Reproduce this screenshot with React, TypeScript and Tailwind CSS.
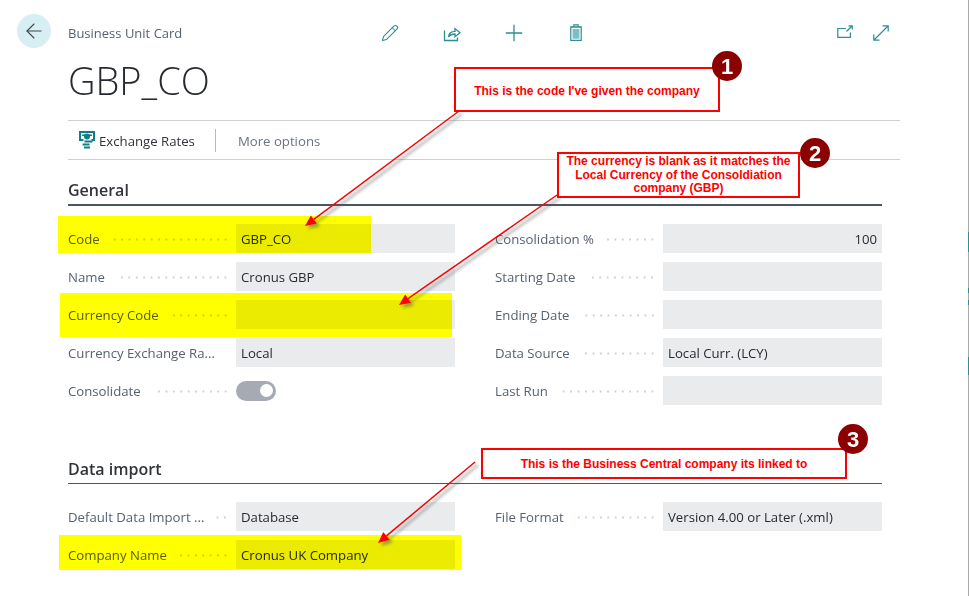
import { ArrowLeft, Pencil } from 'lucide-react';

const teal = '#2b8f94';

function Leader() {
  return (
    <span className="mt-[2px] mr-[7px] ml-3 h-[3px] flex-1 bg-[radial-gradient(circle,#ced1d5_1px,transparent_1.2px)] bg-[length:7.4px_3px] bg-right bg-repeat-x" />
  );
}

function Field({ label, value, right }: { label: string; value?: string; right?: boolean }) {
  return (
    <div className="flex h-[29px] items-center">
      <div className="flex w-[168px] items-center">
        <span className="whitespace-nowrap pt-[2px] text-[13.200px] text-[#566272]">{label}</span>
        <Leader />
      </div>
      <div
        className={`flex h-full flex-1 items-center bg-[#eaebed] px-[5px] pt-[2px] text-[13.200px] text-[#262b33] ${
          right ? 'justify-end pr-[5px]' : ''
        }`}
      >
        {value}
      </div>
    </div>
  );
}

function ToggleField() {
  return (
    <div className="flex h-[29px] items-center">
      <div className="flex w-[168px] items-center">
        <span className="pt-[2px] text-[13.200px] text-[#566272]">Consolidate</span>
        <Leader />
      </div>
      <div className="flex h-5 w-10 items-center justify-end rounded-full bg-[#a6abb3] pr-[3px]">
        <span className="h-[13px] w-[13px] rounded-full bg-white" />
      </div>
    </div>
  );
}

function ShareIcon() {
  return (
    <svg width="18" height="18" viewBox="0 0 18 18" fill="none" stroke={teal} strokeWidth="1.300">
      <path d="M1.500 6.500v10h13v-3" />
      <path d="M5.500 13c.4-3.600 3-5.700 6.500-5.700V4.600l5 4.200-5 3.900V10c-2.800 0-5 .8-6.500 3z" />
    </svg>
  );
}

function PlusIcon() {
  return (
    <svg width="18" height="18" viewBox="0 0 18 18" fill="none" stroke={teal} strokeWidth="1.300">
      <path d="M9 .8v16.400M.8 9h16.400" />
    </svg>
  );
}

function TrashIcon() {
  return (
    <svg width="14" height="17" viewBox="0 0 14 17" stroke={teal} strokeWidth="1.200" fill="none">
      <path d="M1 3h12M4.800 3V.8h4.400V3" />
      <path d="M1.800 3h10.400v13.300H1.800z" />
      <path d="M3.600 5h6.800v9.700H3.600z" fill="#7dbfc2" stroke="none" />
    </svg>
  );
}

function PopoutIcon() {
  return (
    <svg width="16" height="13" viewBox="0 0 16 13" fill="none" stroke={teal} strokeWidth="1.200">
      <path d="M9 3.500H.8v8.800h12.600V7.500" />
      <path d="M9.500 6.500 15 1M11.500.8h3.800v3.800" />
    </svg>
  );
}

function ExpandIcon() {
  return (
    <svg width="16" height="16" viewBox="0 0 16 16" fill="none" stroke={teal} strokeWidth="1.200">
      <path d="M1 15 15 1M9.500.8h5.700v5.700M.8 9.500v5.700h5.700" />
    </svg>
  );
}

function RatesIcon() {
  return (
    <svg width="16" height="18" viewBox="0 0 16 18">
      <path d="M0 0h16v10h-3.500V8H14V2H2v6h2.500v2H0z" fill="#0f7f86" />
      <path d="M3 3.500h3v1.500H3zM9 3.500h4v1.500H9z" fill="#0f7f86" />
      <circle cx="8" cy="5.500" r="3" fill="#0f7f86" />
      <path d="M5.500 9.500h8v2h-8zM3.500 12.500h7v2h-7zM5 15.500h6v2H5z" fill="#0f7f86" />
    </svg>
  );
}

function Arrow({ x1, y1, x2, y2 }: { x1: number; y1: number; x2: number; y2: number }) {
  const a = Math.atan2(y2 - y1, x2 - x1);
  const len = 11;
  const wid = 5;
  const bx = x2 - len * Math.cos(a);
  const by = y2 - len * Math.sin(a);
  const head = `${x2},${y2} ${bx - wid * Math.sin(a)},${by + wid * Math.cos(a)} ${bx + wid * Math.sin(a)},${by - wid * Math.cos(a)}`;
  return (
    <g>
      <g opacity="0.5" filter="url(#arrowBlur)" transform="translate(3 3)">
        <line x1={x1} y1={y1} x2={bx} y2={by} stroke="#555" strokeWidth="2" />
        <polygon points={head} fill="#555" />
      </g>
      <line x1={x1} y1={y1} x2={bx} y2={by} stroke="#ff0000" strokeWidth="1.500" />
      <polygon points={head} fill="#ff0000" />
    </g>
  );
}

function Badge({ n, className }: { n: number; className: string }) {
  return (
    <div
      className={`absolute flex h-[30px] w-[30px] items-center justify-center rounded-full bg-[#8b0000] font-['Liberation_Sans',sans-serif] text-[22px] font-bold text-white ${className}`}
    >
      {n}
    </div>
  );
}

function Callout({ className, children }: { className: string; children: React.ReactNode }) {
  return (
    <div
      className={`absolute flex items-center justify-center border-2 border-[#ff0000] bg-white text-center font-['Liberation_Sans',sans-serif] text-[12px] leading-[13.500px] font-bold text-[#ff0000] ${className}`}
    >
      {children}
    </div>
  );
}

export default function App() {
  return (
    <div className="relative flex h-[596px] w-full overflow-hidden bg-white font-['Open_Sans',sans-serif]">
      <div className="w-[17px]" />
      <div className="w-[51px] pt-[14px]">
        <button className="flex h-[34px] w-[34px] items-center justify-center rounded-full bg-[#d7eff2] text-[#3f4650]">
          <ArrowLeft size={24} strokeWidth={1.100} />
        </button>
      </div>

      <div className="w-[832px]">
        <div className="mt-[14px] flex h-[38px] items-center pr-[3px]">
          <div className="w-[306px] pt-[1px] text-[13px] text-[#566272]">Business Unit Card</div>
          <div className="flex gap-[30px]">
            <span className="flex w-8 justify-center">
              <Pencil size={18} strokeWidth={1.400} color={teal} />
            </span>
            <span className="flex w-8 justify-center">
              <ShareIcon />
            </span>
            <span className="flex w-8 justify-center">
              <PlusIcon />
            </span>
            <span className="flex w-8 justify-center">
              <TrashIcon />
            </span>
          </div>
          <div className="ml-auto flex gap-1">
            <span className="flex w-8 justify-center">
              <PopoutIcon />
            </span>
            <span className="flex w-8 justify-center">
              <ExpandIcon />
            </span>
          </div>
        </div>

        <div className="flex h-[69px] items-center border-b border-[#d0d0d0] pb-[12px] text-[38px] font-light text-[#262a30]">
          GBP_CO
        </div>

        <div className="flex h-[39px] items-center border-b border-[#d0d0d0] pl-[11px] text-[13.200px]">
          <RatesIcon />
          <span className="ml-1 pt-[3px] text-[#30343a]">Exchange Rates</span>
          <span className="mr-[22px] ml-5 h-[23px] w-px bg-[#b5b9be]" />
          <span className="pt-[3px] text-[#6a7482]">More options</span>
        </div>

        <div className="w-[814px]">
          <h2 className="flex h-[46px] items-end border-b-2 border-[#4b5563] pb-[2px] text-[16px] font-semibold text-[#30343a]">
            General
          </h2>
          <div className="mt-[18px] grid grid-cols-2 gap-x-10">
            <div className="flex flex-col gap-[9px]">
              <Field label="Code" value="GBP_CO" />
              <Field label="Name" value="Cronus GBP" />
              <Field label="Currency Code" />
              <Field label="Currency Exchange Ra..." value="Local" />
              <ToggleField />
            </div>
            <div className="flex flex-col gap-[9px]">
              <Field label="Consolidation %" value="100" right />
              <Field label="Starting Date" />
              <Field label="Ending Date" />
              <Field label="Data Source" value="Local Curr. (LCY)" />
              <Field label="Last Run" />
            </div>
          </div>

          <h2 className="mt-[53px] flex h-[26px] items-end border-b border-[#4b5563] pb-[2px] text-[16px] font-semibold text-[#30343a]">
            Data import
          </h2>
          <div className="mt-[18px] grid grid-cols-2 gap-x-10">
            <div className="flex flex-col gap-[9px]">
              <Field label="Default Data Import ..." value="Database" />
              <Field label="Company Name" value="Cronus UK Company" />
            </div>
            <div className="flex flex-col gap-[9px]">
              <Field label="File Format" value="Version 4.00 or Later (.xml)" />
            </div>
          </div>
        </div>
      </div>

      <aside className="ml-auto flex w-px flex-col bg-[#a9a9a9]">
        <div className="mt-[232px] h-5 bg-[#2b8f94]" />
        <div className="mt-9 h-[5px] bg-[#2b8f94]" />
        <div className="mt-[7px] h-[5px] bg-[#2b8f94]" />
        <div className="mt-[52px] h-[18px] bg-[#2b8f94]" />
      </aside>

      {/* screenshot annotations drawn over the page */}
      <div className="absolute top-[216px] left-[58px] h-[37px] w-[313px] bg-[#ffff00] mix-blend-multiply" />
      <div className="absolute top-[293px] left-[60px] h-[44px] w-[392px] bg-[#ffff00] mix-blend-multiply" />
      <div className="absolute top-[535px] left-[59px] h-[35px] w-[402px] bg-[#ffff00] mix-blend-multiply" />

      <svg className="absolute inset-0 h-[596px] w-[969px]" viewBox="0 0 969 596">
        <defs>
          <filter id="arrowBlur">
            <feGaussianBlur stdDeviation="1.500" />
          </filter>
        </defs>
        <Arrow x1={459} y1={111} x2={305} y2={226} />
        <Arrow x1={557} y1={195} x2={399} y2={305} />
        <Arrow x1={475} y1={462} x2={378} y2={543} />
      </svg>

      <Callout className="top-[67px] left-[454px] h-[45px] w-[266px] pt-[5px]">This is the code I've given the company</Callout>
      <Callout className="top-[152px] left-[557px] h-[46px] w-[243px] px-1 pt-[1px]">
        The currency is blank as it matches the Local Currency of the Consoldiation company (GBP)
      </Callout>
      <Callout className="top-[448px] left-[481px] h-[31px] w-[366px] pt-[3px]">
        This is the Business Central company its linked to
      </Callout>

      <Badge n={1} className="top-[51px] left-[712px]" />
      <Badge n={2} className="top-[138px] left-[800px]" />
      <Badge n={3} className="top-[424px] left-[838px]" />
    </div>
  );
}
